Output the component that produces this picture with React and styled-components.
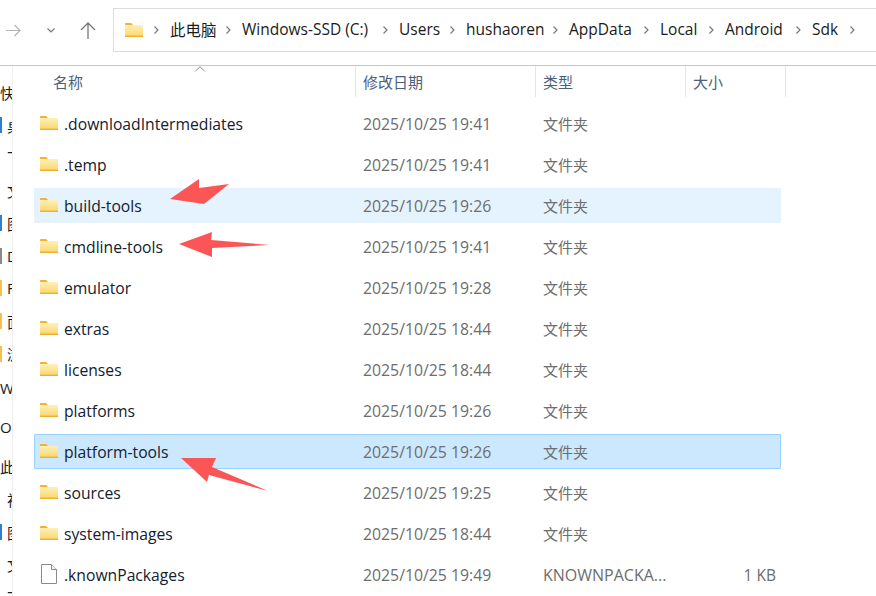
import React from 'react'
import styled, { createGlobalStyle } from 'styled-components'

const GlobalStyle = createGlobalStyle`
  html, body {
    margin: 0;
    padding: 0;
    background: #fff;
  }
  body {
    font-family: "Open Sans", "Noto Sans CJK SC", sans-serif;
  }
`

const Window = styled.div`
  position: relative;
  width: 876px;
  height: 596px;
  overflow: hidden;
  background: #fff;
  color: #1a1a1a;
`

const Toolbar = styled.div`
  height: 65px;
  display: flex;
  align-items: flex-start;
  border-bottom: 1px solid #c9c9c9;
`

const NavButtons = styled.div`
  width: 113px;
  height: 60px;
  display: flex;
  align-items: center;
`

const NavIcon = styled.svg`
  flex: none;
  margin-left: ${p => p.$left}px;
`

const AddressBar = styled.div`
  flex: 1;
  height: 42px;
  margin-top: 8px;
  border: 1px solid #dcdcdc;
  border-right: none;
  display: flex;
  align-items: center;
  padding-left: 11px;
  font-size: 15.5px;
  white-space: nowrap;
`

const Crumb = styled.span`
  width: ${p => p.$width}px;
  flex: none;
  margin-top: -2px;
`

const Chevron = styled.svg`
  flex: none;
  margin: 0 11px;
`

const Body = styled.div`
  display: flex;
  height: 530px;
`

const Sidebar = styled.div`
  width: 13px;
  flex: none;
  box-sizing: border-box;
  border-right: 1px solid #eee;
  overflow: hidden;
  padding-top: 10px;
  display: flex;
  flex-direction: column;
  font-size: 15px;
`

const SideItem = styled.div`
  height: 32.7px;
  flex: none;
  margin-top: ${p => p.$gap || 0}px;
  padding-left: ${p => (p.$inset ? 7 : 0)}px;
  display: flex;
  align-items: center;
  white-space: nowrap;
`

const SideMark = styled.span`
  width: 2px;
  height: 16px;
  flex: none;
  margin-right: 5px;
  background: ${p => p.$color};
`

const Main = styled.div`
  flex: 1;
  min-width: 0;
  padding-left: 21px;
`

const Header = styled.div`
  height: 31px;
  display: flex;
  position: relative;
  color: #4c607a;
  font-size: 15px;
`

const HeaderCell = styled.div`
  width: ${p => p.$width}px;
  flex: none;
  padding-left: ${p => p.$inset || 7}px;
  box-sizing: border-box;
  line-height: 32px;
  border-right: 1px solid #e5e5e5;
`

const SortCaret = styled.svg`
  position: absolute;
  left: 161px;
  top: 0;
`

const Rows = styled.div`
  display: flex;
  flex-direction: column;
  gap: 6px;
  padding-top: 9px;
`

const Row = styled.div`
  width: 747px;
  height: 35px;
  box-sizing: border-box;
  display: flex;
  align-items: center;
  border-radius: 1px;
  background: ${p => (p.$state === 'selected' ? '#cce8ff' : p.$state === 'hover' ? '#e5f3ff' : 'transparent')};
  border: 1px solid ${p => (p.$state === 'selected' ? '#99d1ff' : 'transparent')};
`

const NameCell = styled.div`
  width: 328px;
  flex: none;
  display: flex;
  align-items: center;
  gap: 6px;
  padding-left: 5px;
  box-sizing: border-box;
  font-size: 15.7px;
  color: #14202e;
`

const IconSlot = styled.span`
  width: 18px;
  flex: none;
  display: flex;
  justify-content: center;
  margin-top: -2px;
`

const DateCell = styled.div`
  width: 180px;
  flex: none;
  font-size: 15.8px;
  color: #6d6d6d;
`

const TypeCell = styled.div`
  width: 144px;
  flex: none;
  font-size: ${p => (p.$latin ? 16 : 15)}px;
  color: #6d6d6d;
  white-space: nowrap;
`

const SizeCell = styled.div`
  width: 89px;
  flex: none;
  text-align: right;
  font-size: 15.5px;
  color: #6d6d6d;
`

const Arrows = styled.svg`
  position: absolute;
  left: 0;
  top: 0;
  pointer-events: none;
`

const FolderIcon = () => (
  <svg width="18" height="14" viewBox="0 0 18 14">
    <path d="M0 1c0-.6.4-1 1-1h4.6c.4 0 .7.1 1 .4L8 2H0z" fill="#f4b32a" />
    <rect x="0" y="2" width="18" height="12" rx="1" fill="url(#folderFill)" />
    <rect x="0" y="12.6" width="18" height="1.4" fill="#eeb02f" />
  </svg>
)

const FileIcon = () => (
  <svg width="16" height="20" viewBox="0 0 16 20">
    <path d="M.5.5h10l5 5v14H.5z" fill="#fff" stroke="#8a8a8a" />
    <path d="M10.5.5v5h5" fill="#f2f2f2" stroke="#8a8a8a" />
  </svg>
)

const ChevronIcon = () => (
  <Chevron width="5" height="8" viewBox="0 0 5 8" fill="none" stroke="#777" strokeWidth="1.2">
    <path d="M.5.5 4 4 .5 7.5" />
  </Chevron>
)

const crumbs = [
  ['此电脑', 45],
  ['Windows-SSD (C:)', 130],
  ['Users', 40],
  ['hushaoren', 76],
  ['AppData', 64],
  ['Local', 38],
  ['Android', 60],
  ['Sdk', 27],
]

const sideItems = [
  { text: '快' },
  { text: '桌', mark: '#2f7fd0' },
  { text: '下', inset: true },
  { text: '文', inset: true },
  { text: '图', mark: '#2f7fd0' },
  { text: 'D', mark: '#8a8a8a' },
  { text: 'F', mark: '#f4c04e' },
  { text: '面', mark: '#f4c04e' },
  { text: '浏', mark: '#f4c04e' },
  { text: 'W', gap: 1 },
  { text: 'On', gap: 7 },
  { text: '此', gap: 7 },
  { text: '视', inset: true },
  { text: '图', mark: '#2f7fd0' },
  { text: '文', inset: true },
  { text: '下', inset: true },
]

const files = [
  { name: '.downloadIntermediates', date: '2025/10/25 19:41' },
  { name: '.temp', date: '2025/10/25 19:41' },
  { name: 'build-tools', date: '2025/10/25 19:26', state: 'hover' },
  { name: 'cmdline-tools', date: '2025/10/25 19:41' },
  { name: 'emulator', date: '2025/10/25 19:28' },
  { name: 'extras', date: '2025/10/25 18:44' },
  { name: 'licenses', date: '2025/10/25 18:44' },
  { name: 'platforms', date: '2025/10/25 19:26' },
  { name: 'platform-tools', date: '2025/10/25 19:26', state: 'selected' },
  { name: 'sources', date: '2025/10/25 19:25' },
  { name: 'system-images', date: '2025/10/25 18:44' },
  { name: '.knownPackages', date: '2025/10/25 19:49', type: 'KNOWNPACKA...', size: '1 KB', file: true },
]

export default function App() {
  return (
    <Window>
      <GlobalStyle />
      <svg width="0" height="0" style={{ position: 'absolute' }}>
        <defs>
          <linearGradient id="folderFill" x1="0" y1="0" x2="0" y2="1">
            <stop offset="0" stopColor="#fff0b8" />
            <stop offset="1" stopColor="#fbd568" />
          </linearGradient>
        </defs>
      </svg>
      <Toolbar>
        <NavButtons>
          <NavIcon $left={6} width="15" height="13" viewBox="0 0 15 13" fill="none" stroke="#b4b4b4" strokeWidth="1.2">
            <path d="M0 6.5h14M8.5 1l5.5 5.5L8.5 12" />
          </NavIcon>
          <NavIcon $left={26} width="8" height="5" viewBox="0 0 8 5" fill="none" stroke="#777" strokeWidth="1.2">
            <path d="M.5.5 4 4 7.5.5" />
          </NavIcon>
          <NavIcon $left={25} width="16" height="17" viewBox="0 0 16 17" fill="none" stroke="#777" strokeWidth="1.3">
            <path d="M8 17V1M1 8l7-7 7 7" />
          </NavIcon>
        </NavButtons>
        <AddressBar>
          <FolderIcon />
          <ChevronIcon />
          {crumbs.map(([label, width]) => (
            <React.Fragment key={label}>
              <Crumb $width={width}>{label}</Crumb>
              <ChevronIcon />
            </React.Fragment>
          ))}
        </AddressBar>
      </Toolbar>
      <Body>
        <Sidebar>
          {sideItems.map((item, i) => (
            <SideItem key={i} $inset={item.inset} $gap={item.gap}>
              {item.mark && <SideMark $color={item.mark} />}
              {item.text}
            </SideItem>
          ))}
        </Sidebar>
        <Main>
          <Header>
            <SortCaret width="10" height="6" viewBox="0 0 10 6" fill="none" stroke="#8a8a8a">
              <path d="M.5 5 5 .8 9.5 5" />
            </SortCaret>
            <HeaderCell $width={322} $inset={19}>名称</HeaderCell>
            <HeaderCell $width={180}>修改日期</HeaderCell>
            <HeaderCell $width={150}>类型</HeaderCell>
            <HeaderCell $width={100}>大小</HeaderCell>
          </Header>
          <Rows>
            {files.map(f => (
              <Row key={f.name} $state={f.state}>
                <NameCell>
                  <IconSlot>{f.file ? <FileIcon /> : <FolderIcon />}</IconSlot>
                  {f.name}
                </NameCell>
                <DateCell>{f.date}</DateCell>
                <TypeCell $latin={!!f.type}>{f.type || '文件夹'}</TypeCell>
                {f.size && <SizeCell>{f.size}</SizeCell>}
              </Row>
            ))}
          </Rows>
        </Main>
      </Body>
      <Arrows width="876" height="596" viewBox="0 0 876 596" fill="#fc5555">
        <polygon points="170,199 199,179 199,188 229,184 204,204" />
        <polygon points="179,244 212,232 211,240 270,245 212,248 212,257" />
        <polygon points="181,458 216,458 212,467 268,491 209,475 207,482" />
      </Arrows>
    </Window>
  )
}
